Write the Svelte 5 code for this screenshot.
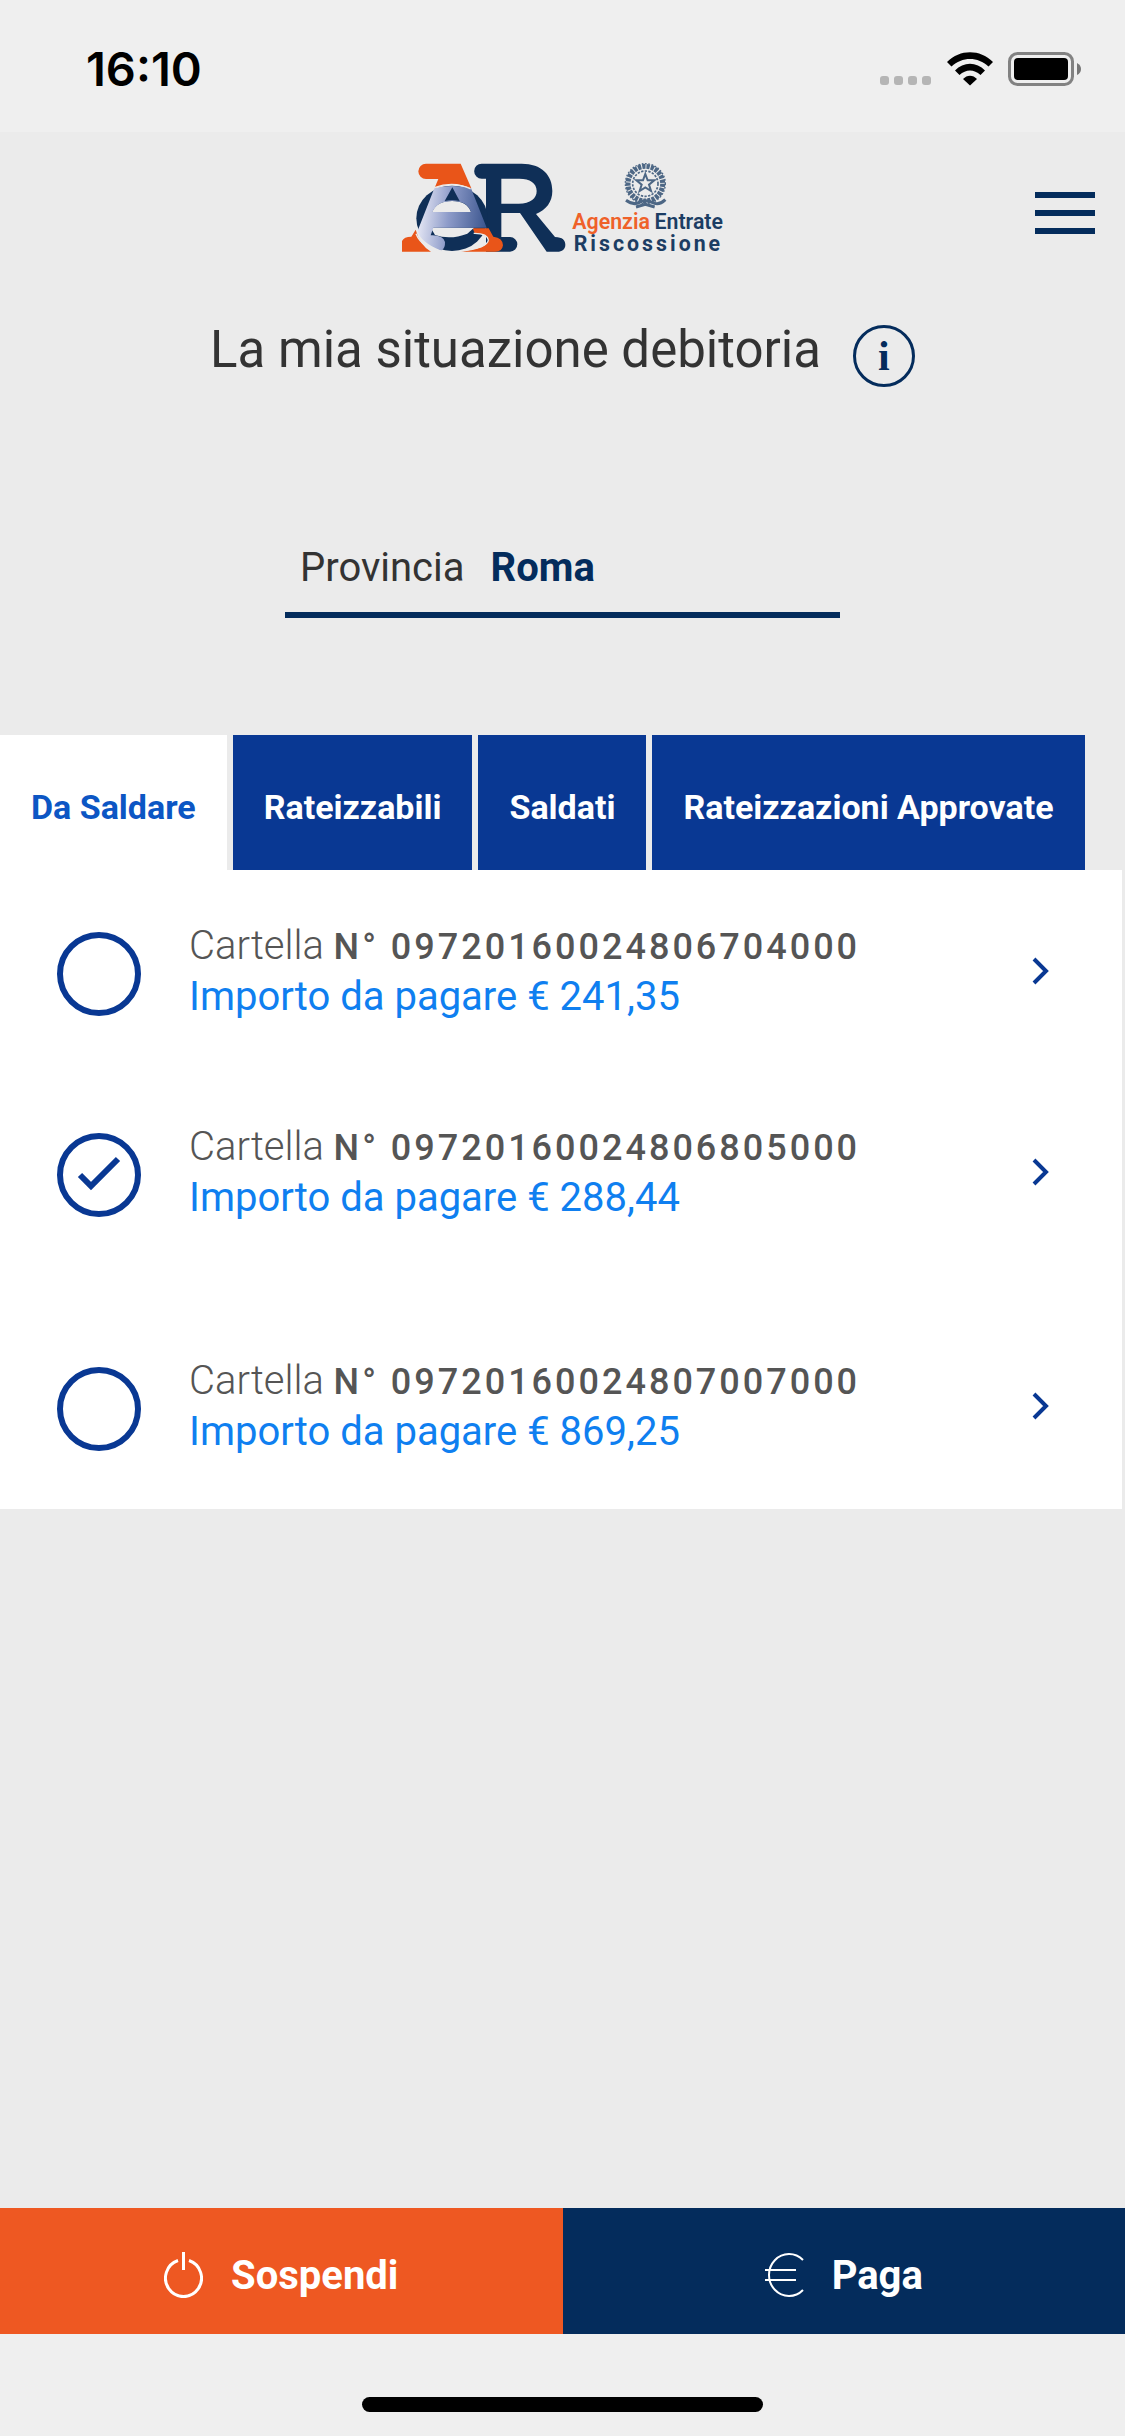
<script>
  const tabs = ['Da Saldare', 'Rateizzabili', 'Saldati', 'Rateizzazioni Approvate'];
  let activeTab = $state(0);
  let bills = $state([
    { id: '09720160024806704000', amount: '241,35', selected: false },
    { id: '09720160024806805000', amount: '288,44', selected: true },
    { id: '09720160024807007000', amount: '869,25', selected: false }
  ]);
</script>

<div class="screen">
  <div class="status">
    <span class="clock">16:10</span>
    <div class="indicators">
      <svg class="signal" viewBox="0 0 52 34" aria-hidden="true">
        <g fill="#b5b5b5">
          <rect x="0" y="24" width="9" height="9" rx="3" />
          <rect x="14" y="24" width="9" height="9" rx="3" />
          <rect x="28" y="24" width="9" height="9" rx="3" />
          <rect x="42" y="24" width="9" height="9" rx="3" />
        </g>
      </svg>
      <svg class="wifi" viewBox="0 0 46 34" aria-hidden="true">
        <path d="M0 10C13-3 33-3 46 10L41.500 14.500C31 4.500 15 4.500 4.500 14.500Z" />
        <path d="M8 18.500C16.500 9.500 29.500 9.500 38 18.500L33.500 23C27 17 19 17 12.500 23Z" />
        <path d="M16 27C20 22.500 26 22.500 30 27L23 33.500Z" />
      </svg>
      <svg class="battery" viewBox="0 0 74 34" aria-hidden="true">
        <rect x="1.500" y="1.500" width="63" height="31" rx="8" fill="none" stroke="#828282" stroke-width="3" />
        <rect x="6" y="6" width="54" height="22" rx="4" />
        <path d="M69 11Q73 13 73 17T69 23Z" fill="#777" />
      </svg>
    </div>
  </div>

  <header class="header">
    <svg class="logo" viewBox="66 64 966 288" role="img" aria-label="Agenzia Entrate Riscossione">
      <defs>
        <linearGradient id="sheen" x1="0" x2="1" y1="0.400" y2="0.500">
          <stop offset="0" stop-color="#e9eaf6" />
          <stop offset="0.450" stop-color="#8d9bc9" />
          <stop offset="1" stop-color="#3c568f" />
        </linearGradient>
      </defs>
      <path fill="#e95519" d="M138 72H242L274 146Q221 122 164 144L175 118H138A23 23 0 0 1 138 72Z" />
      <path fill="#0f2f57" d="M305 72H425C485 72 517 106 517 154C517 187 498 211 468 223L525 292C548 292 556 303 556 315C556 329 546 336 532 336H500L420 220H364V292H390A22 22 0 0 1 390 336H318V117H305A22 22 0 0 1 305 72ZM364 117V192H416C452 192 470 176 470 154C470 130 450 117 418 117Z" />
      <path fill="#e95519" d="M66 336V304Q72 291 94 291L107 270Q119 316 153 336Z" />
      <ellipse cx="216" cy="236" rx="107" ry="98" fill="#0f2f57" />
      <path fill="#e95519" d="M278 266H326L340 291Q369 295 369 317Q367 336 345 336H240Q324 326 325 302Q323 282 284 281Z" />
      <path fill="#ebebeb" d="M156 217Q170 184 216 184Q261 184 273 217Z" />
      <path fill="#ebebeb" d="M152 264H282L262 282Q211 302 165 286Z" />
      <path fill="url(#sheen)" d="M163 146Q216 132 273 146L320 264H160L152 287Q189 285 195 307Q196 327 184 333Q119 306 113 273ZM217 143L194 184Q217 179 239 184ZM157 217H273Q263 184 217 184Q171 184 157 217Z" />
      <path fill="none" stroke="#ebebeb" stroke-width="4" d="M163 144Q221 122 272 148M108 282Q126 327 192 335M281 281Q322 280 325 301Q323 326 240 335" />
      <g fill="none" stroke="#4d6785">
        <circle cx="796" cy="132" r="52" stroke-width="15" stroke-dasharray="10 3" />
        <circle cx="796" cy="132" r="38" stroke-width="5" stroke-dasharray="7 4" />
        <circle cx="796" cy="132" r="60" stroke-width="4" stroke-dasharray="5 5" />
        <path stroke-width="6" d="M796 103L803 122H823L807 135L813 154L796 143L779 154L785 135L769 122H789Z" />
        <path stroke-width="9" d="M738 182Q760 198 778 188T816 188Q836 200 856 180M768 202L796 194L824 202" />
      </g>
      <g class="wordmark">
        <text x="577" y="267" fill="#ef6129" font-size="64">Agenzia</text>
        <text x="1029" y="267" text-anchor="end" fill="#1c3d63" font-size="64">Entrate</text>
        <text class="spaced" x="581" y="334" fill="#1c3d63" font-size="64">Riscossione</text>
      </g>
    </svg>
    <button class="menu" aria-label="Menu"><i></i><i></i><i></i></button>
  </header>

  <main>
    <div class="title-row">
      <h1>La mia situazione debitoria</h1>
      <button class="info" aria-label="Informazioni">i</button>
    </div>

    <div class="province">
      <label for="province">Provincia</label>
      <select id="province"><option>Roma</option></select>
    </div>

    <div class="tabs" role="tablist">
      {#each tabs as tab, i}
        <button role="tab" aria-selected={activeTab === i} class:active={activeTab === i} onclick={() => (activeTab = i)}>{tab}</button>
      {/each}
    </div>

    <ul class="bills">
      {#each bills as bill, i}
        <li>
          <span class="check">
            <input type="checkbox" id="bill-{i}" bind:checked={bill.selected} />
            {#if bill.selected}
              <svg viewBox="0 0 84 84" aria-hidden="true"><path d="M23 42L34 53L61 26" /></svg>
            {/if}
          </span>
          <label for="bill-{i}">
            <span class="folder">Cartella <b>N° {bill.id}</b></span>
            <span class="amount">Importo da pagare € {bill.amount}</span>
          </label>
          <button class="open" aria-label="Apri cartella {bill.id}">
            <svg viewBox="0 0 18 28" aria-hidden="true"><path d="M2 2L14 14L2 26" /></svg>
          </button>
        </li>
      {/each}
    </ul>
  </main>

  <div class="actions">
    <button class="suspend">
      <svg class="power" viewBox="0 0 39 46" aria-hidden="true"><path d="M14 8.500A18 18.500 0 1 0 25 8.500M19.500 0V18" /></svg>
      Sospendi
    </button>
    <button class="pay">
      <svg class="euro" viewBox="0 0 39 46" aria-hidden="true"><path d="M38 8A20 21 0 1 0 38 38M0 18H31M0 28H31" /></svg>
      Paga
    </button>
  </div>
  <div class="home"><span></span></div>
</div>

<style>
  :global(body) {
    margin: 0;
    background: #efefef;
  }
  .screen {
    min-height: 100vh;
    display: flex;
    flex-direction: column;
    background: #ebebeb;
    color: #333;
    font-family: Roboto, 'Liberation Sans', sans-serif;
    font-size: 40px;
    font-weight: 400;
  }
  button,
  select {
    margin: 0;
    padding: 0;
    border: 0;
    background: none;
    color: inherit;
    font: inherit;
    cursor: pointer;
  }
  svg {
    display: block;
  }
  .status {
    box-sizing: border-box;
    height: 132px;
    padding: 0 43px 0 86px;
    display: flex;
    justify-content: space-between;
    background: #efefef;
    color: #000;
  }
  .clock {
    padding-top: 40px;
    font-family: Inter, sans-serif;
    font-size: 47px;
    line-height: 58px;
    font-weight: 600;
  }
  .indicators {
    display: flex;
    gap: 15px;
    padding-top: 52px;
  }
  .signal { width: 52px; height: 34px; }
  .wifi { width: 46px; height: 34px; }
  .battery { width: 74px; height: 34px; }
  .header {
    display: grid;
    grid-template-columns: 60px 1fr 60px;
    align-items: center;
    padding: 29px 30px 0;
  }
  .logo {
    grid-column: 2;
    justify-self: center;
    width: 322px;
    height: 96px;
    overflow: visible;
  }
  .wordmark {
    font-family: Roboto, sans-serif;
    font-weight: 600;
  }
  .spaced {
    font-weight: 700;
    letter-spacing: 9px;
  }
  .menu {
    display: grid;
    gap: 12px;
    padding-top: 8px;
  }
  .menu i {
    height: 6px;
    background: #042c5c;
  }
  main {
    flex: 1;
  }
  .title-row {
    display: flex;
    justify-content: center;
    align-items: center;
    gap: 32px;
    padding-top: 56px;
  }
  h1 {
    margin: 0;
    font-size: 51px;
    line-height: 64px;
    font-weight: 400;
  }
  .info {
    box-sizing: border-box;
    width: 62px;
    height: 62px;
    margin-top: 12px;
    border: 3px solid #042c5c;
    border-radius: 50%;
    color: #042c5c;
    font: bold 42px/54px 'Liberation Serif', serif;
  }
  .province {
    box-sizing: border-box;
    width: 555px;
    margin: 153px auto 117px;
    padding: 0 0 16px 15px;
    border-bottom: 6px solid #042c5c;
    display: flex;
    gap: 26px;
    line-height: 56px;
  }
  .province select {
    flex: 1;
    appearance: none;
    color: #042c5c;
    font-weight: 700;
  }
  .tabs {
    display: flex;
    gap: 6px;
  }
  .tabs button {
    padding: 10px 31px 0;
    background: #093893;
    color: #fff;
    font-size: 34px;
    line-height: 125px;
    font-weight: 700;
    white-space: nowrap;
  }
  .tabs .active {
    background: #fff;
    color: #0c56c4;
  }
  .bills {
    list-style: none;
    margin: 0 3px 0 0;
    padding: 0 0 3px;
    background: #fff;
  }
  .bills li {
    display: grid;
    grid-template-columns: 84px 1fr 21px;
    gap: 48px;
    align-items: center;
    padding: 50px 69px 49px 57px;
  }
  .bills li:last-child {
    margin-top: 33px;
  }
  .check {
    display: grid;
    padding-top: 6px;
  }
  .check > * {
    grid-area: 1 / 1;
  }
  .check input {
    appearance: none;
    box-sizing: border-box;
    width: 84px;
    height: 84px;
    margin: 0;
    border: 6px solid #093893;
    border-radius: 50%;
  }
  .check svg {
    width: 84px;
    height: 84px;
    pointer-events: none;
  }
  .check path,
  .open path {
    fill: none;
    stroke: #093893;
    stroke-width: 6;
  }
  .open path {
    stroke-width: 4;
  }
  .bills label {
    display: grid;
    line-height: 51px;
  }
  .folder {
    color: #555;
    font-weight: 300;
  }
  .folder b {
    font-size: 36px;
    line-height: 36px;
    font-weight: 500;
    letter-spacing: 3px;
  }
  .amount {
    color: #0f7ff0;
  }
  .open svg {
    width: 18px;
    height: 28px;
  }
  .actions {
    display: grid;
    grid-template-columns: 1fr 1fr;
  }
  .actions button {
    display: flex;
    justify-content: center;
    align-items: center;
    gap: 28px;
    height: 126px;
    padding-top: 8px;
    color: #fff;
    font-weight: 700;
  }
  .suspend { background: #ee5822; }
  .pay { background: #042c5c; }
  .actions svg {
    width: 39px;
    height: 46px;
    fill: none;
    stroke: #fff;
    stroke-width: 2;
  }
  .actions .power {
    stroke-width: 3;
  }
  .home {
    padding: 63px 0 24px;
    background: #efefef;
  }
  .home span {
    display: block;
    width: 401px;
    height: 15px;
    margin: 0 auto;
    border-radius: 8px;
    background: #000;
  }
</style>
